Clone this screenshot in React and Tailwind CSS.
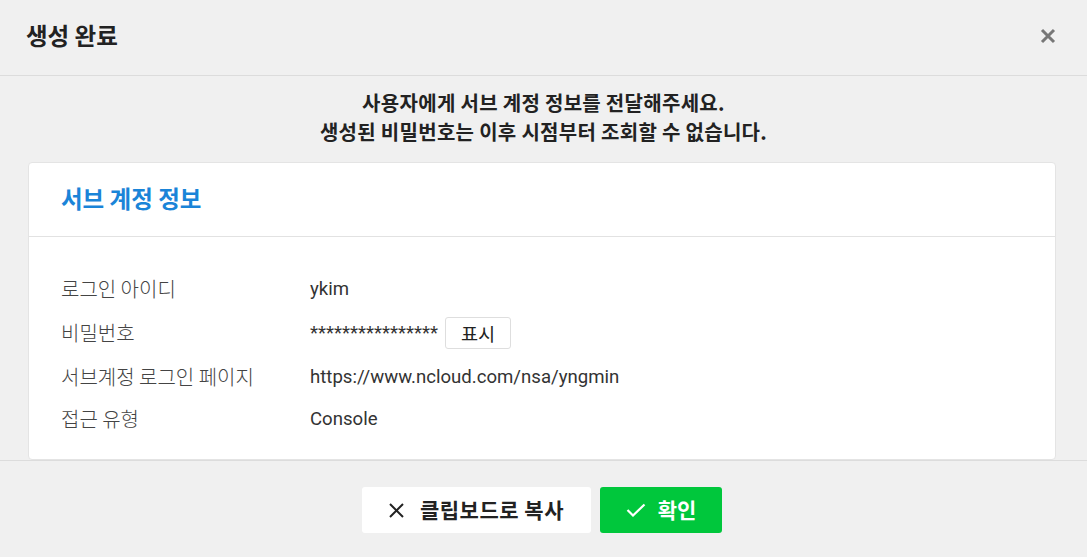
import React from "react";

const KR = {
  fontFamily: "'Noto Sans CJK KR', 'Noto Sans', sans-serif",
};

const rows = [
  { label: "로그인 아이디", value: "ykim" },
  { label: "비밀번호", value: "****************", toggle: true },
  { label: "서브계정 로그인 페이지", value: "https://www.ncloud.com/nsa/yngmin" },
  { label: "접근 유형", value: "Console" },
];

const App = () => {
  return (
    <div
      className="w-[1087px] h-[557px] bg-[#f0f0f0] flex flex-col overflow-hidden"
      style={KR}
    >
      {/* header */}
      <div className="h-[76px] shrink-0 flex items-center justify-between pl-[26px] pr-[31px] pb-[4px] border-b border-[#dcdcdc]">
        <h1 className="text-[23.5px] font-bold text-[#222] leading-none">생성 완료</h1>
        <svg width="16" height="16" viewBox="0 0 16 16" className="text-[#777]">
          <path d="M2 2 L14 14 M14 2 L2 14" stroke="currentColor" strokeWidth="3" />
        </svg>
      </div>

      {/* body */}
      <div className="flex-1 flex flex-col pl-[28px] pr-[31px] pt-[12px]">
        <div className="text-center text-[20px] font-bold text-[#222] leading-[29px] tracking-[0.3px] pl-[3px]">
          <p>사용자에게 서브 계정 정보를 전달해주세요.</p>
          <p>생성된 비밀번호는 이후 시점부터 조회할 수 없습니다.</p>
        </div>

        <div className="mt-[16px] flex-1 bg-white border border-[#e4e4e4] rounded-[4px]">
          <div className="h-[74px] flex items-center px-[32px] pb-[2px] border-b border-[#e2e2e2]">
            <h2 className="text-[23.5px] font-bold text-[#1a84d8] leading-none">서브 계정 정보</h2>
          </div>
          <div className="pt-[31px] px-[32px]">
            {rows.map((row) => (
              <div
                key={row.label}
                className={`flex items-center ${row.toggle ? "h-[46px]" : "h-[42px]"}`}
              >
                <div className="w-[249px] shrink-0 text-[20px] font-light text-[#444] leading-[28px]">
                  {row.label}
                </div>
                <div
                  className="flex items-center text-[18.6px] text-[#333] leading-[28px]"
                  style={{ fontFamily: "Roboto, 'Noto Sans CJK KR', sans-serif" }}
                >
                  <span>{row.value}</span>
                  {row.toggle ? (
                    <button
                      className="ml-[7px] h-[32px] w-[66px] bg-white border border-[#dedede] rounded-[3px] text-[18.6px] text-[#222] flex items-center justify-center"
                      style={KR}
                    >
                      표시
                    </button>
                  ) : null}
                </div>
              </div>
            ))}
          </div>
        </div>
      </div>

      {/* footer */}
      <div className="h-[97px] shrink-0 border-t border-[#dcdcdc] flex items-center justify-center gap-[9px] pr-[3px] pt-[2px]">
        <button className="h-[46px] w-[229px] bg-white rounded-[3px] flex items-center justify-center gap-[16px] text-[21px] font-bold text-[#222] tracking-[0.5px]">
          <svg width="15" height="15" viewBox="0 0 15 15">
            <path d="M1 1 L14 14 M14 1 L1 14" stroke="#222" strokeWidth="2" />
          </svg>
          클립보드로 복사
        </button>
        <button className="h-[46px] w-[122px] bg-[#00c73c] rounded-[3px] flex items-center justify-center gap-[12px] text-[21px] font-bold text-white">
          <svg width="20" height="14" viewBox="0 0 20 14">
            <path d="M1.5 7 L7 12.5 L18.5 1.5" stroke="white" strokeWidth="2.2" fill="none" />
          </svg>
          확인
        </button>
      </div>
    </div>
  );
};

export default App;
